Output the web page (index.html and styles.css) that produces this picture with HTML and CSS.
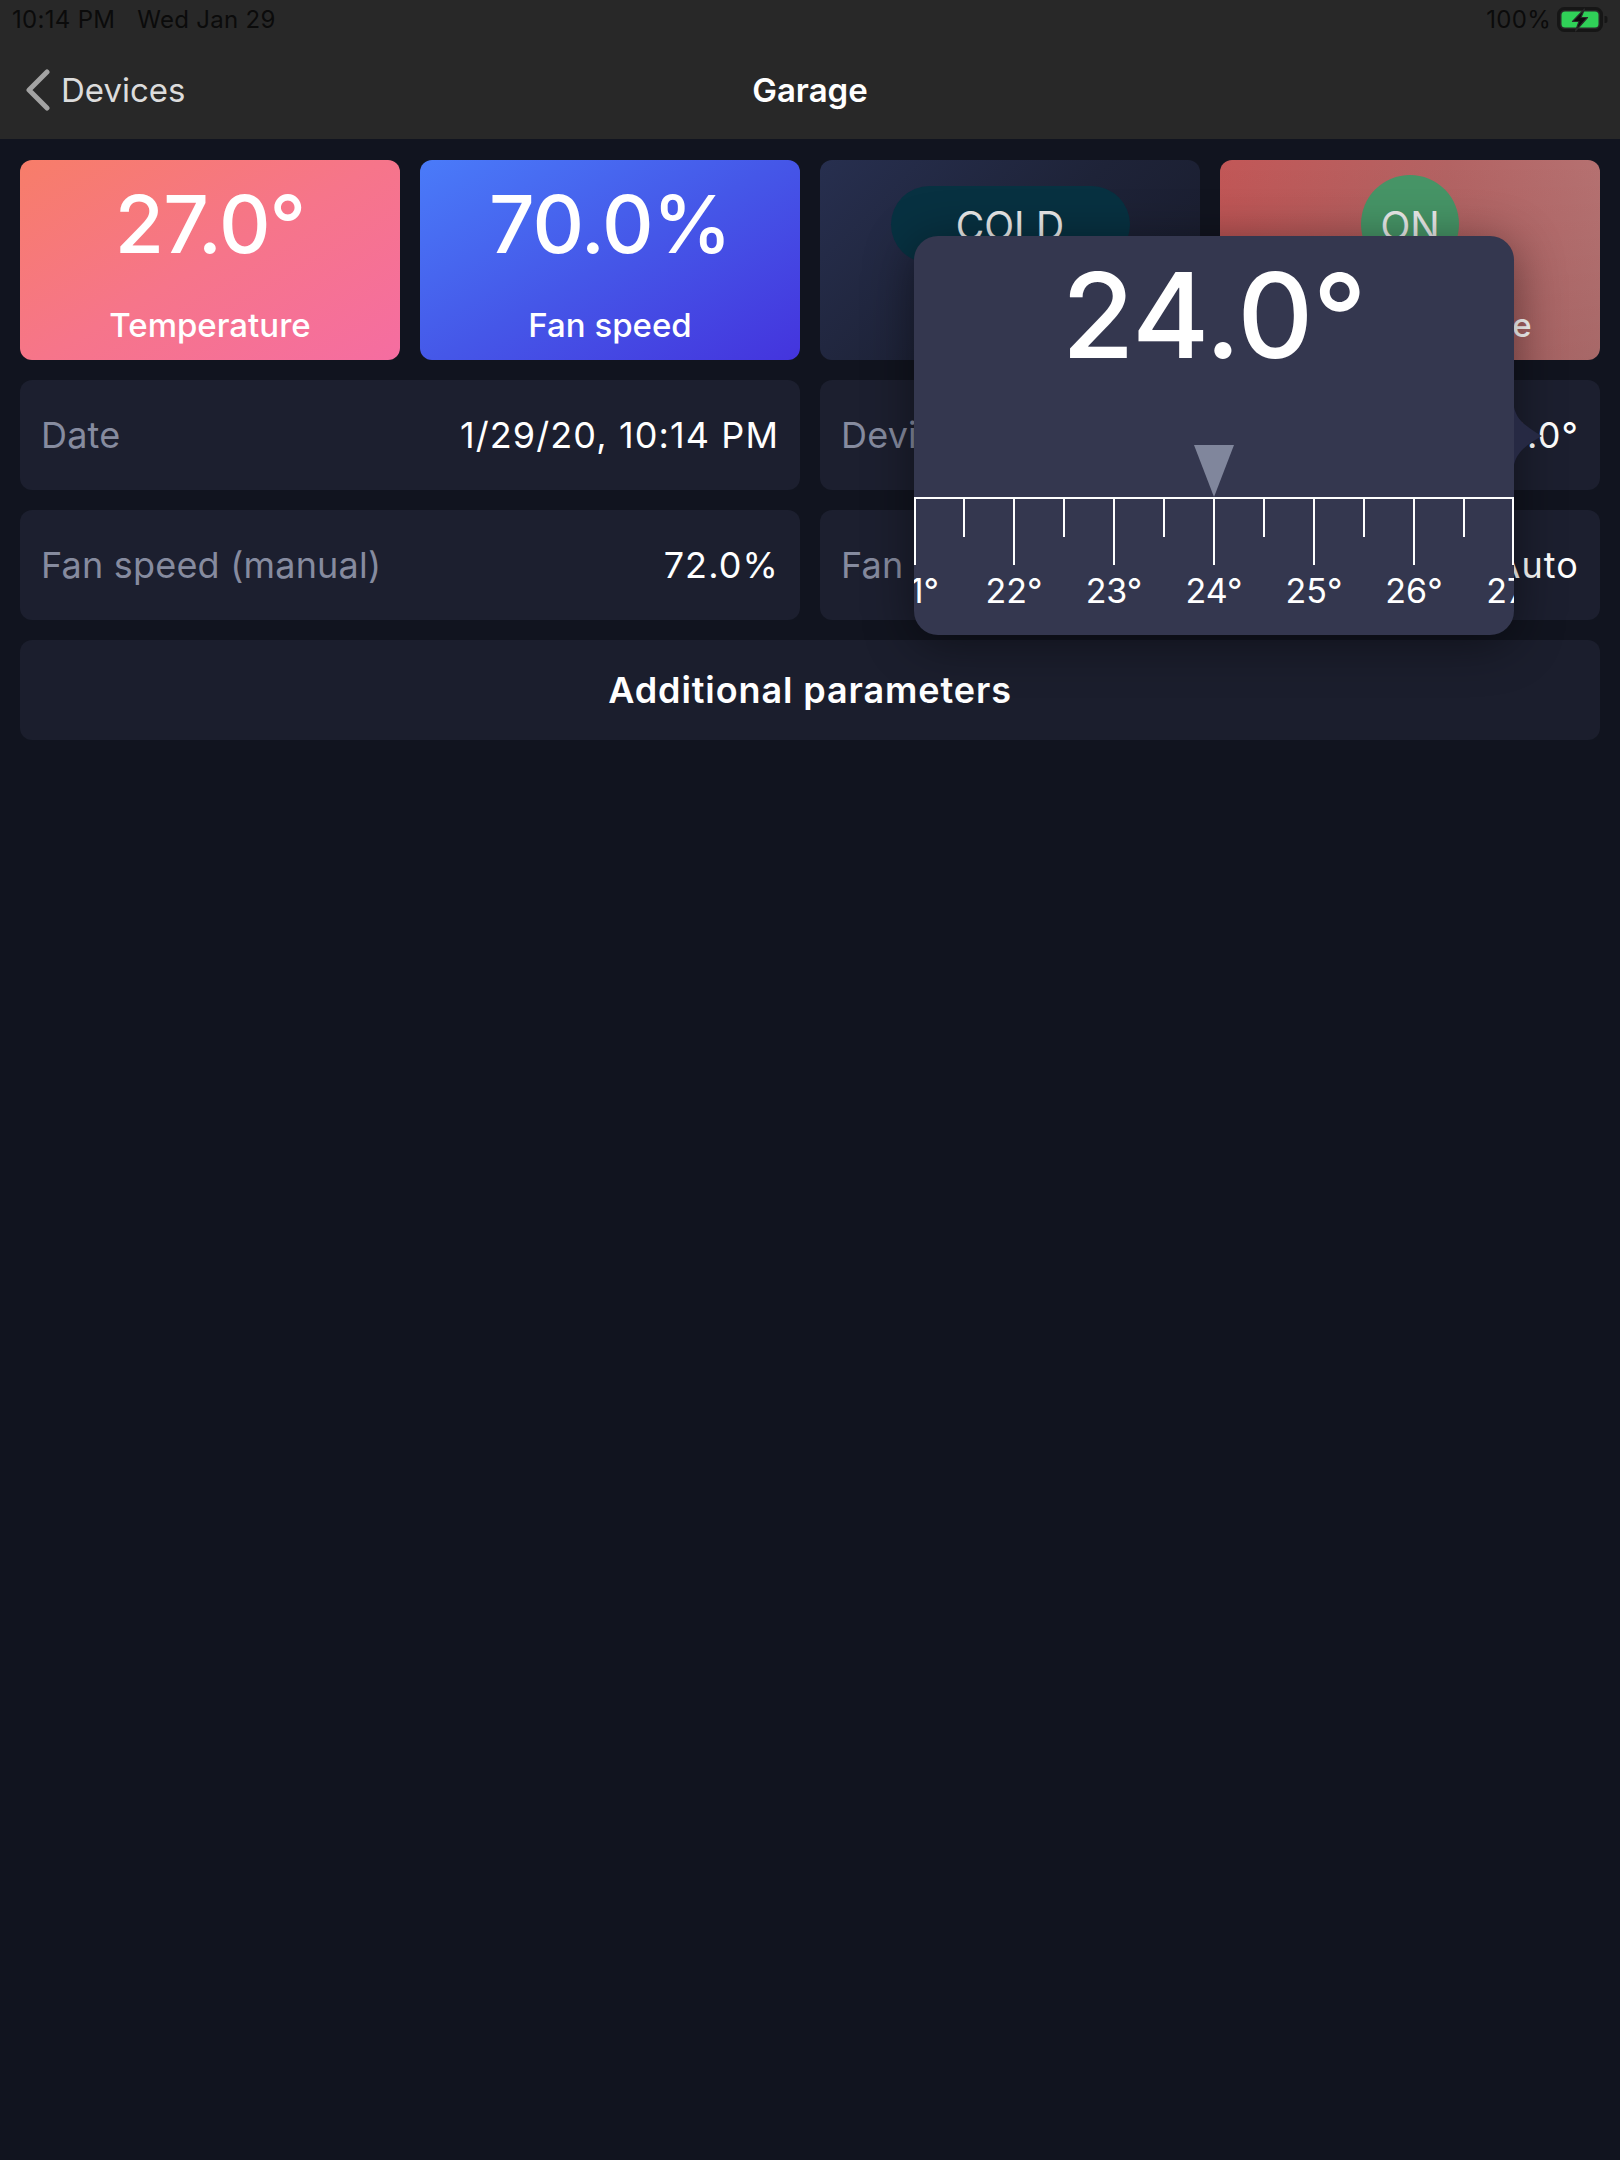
FILE: index.html
```html
<!DOCTYPE html>
<html lang="en">
<head>
<meta charset="utf-8">
<title>Garage</title>
<link rel="stylesheet" href="styles.css">
</head>
<body>
<header class="topbar">
  <div class="status">
    <div class="status-left"><span>10:14 PM</span><span>Wed Jan 29</span></div>
    <div class="status-right">
      <span>100%</span>
      <svg class="battery" width="52" height="26" viewBox="0 0 52 26">
        <rect x="1.5" y="1.5" width="43" height="22" rx="6" fill="none" stroke="#161616" stroke-width="3"/>
        <rect x="4.5" y="4.5" width="37" height="16" rx="3.5" fill="#30d158"/>
        <path d="M47.5 9 h1 a2 2 0 0 1 2 2 v3 a2 2 0 0 1 -2 2 h-1 z" fill="#161616"/>
        <path d="M27.5 2 L15.5 14.5 H22 L18.5 24 L30.5 10.5 H24 Z" fill="#0d0d0d" stroke="#2a2a2a" stroke-width="1.2" stroke-linejoin="round"/>
      </svg>
    </div>
  </div>
  <nav class="nav">
    <div class="back">
      <svg width="26" height="42" viewBox="0 0 26 42"><polyline points="22,3 4,21 22,39" fill="none" stroke="#a3a3a3" stroke-width="5" stroke-linecap="round" stroke-linejoin="round"/></svg>
      <span>Devices</span>
    </div>
    <div class="title">Garage</div>
    <div></div>
  </nav>
</header>

<main class="content">
  <section class="cards">
    <div class="card card-temp">
      <div class="card-top"><span class="card-value">27.0°</span></div>
      <div class="card-label">Temperature</div>
    </div>
    <div class="card card-fan">
      <div class="card-top"><span class="card-value">70.0%</span></div>
      <div class="card-label">Fan speed</div>
    </div>
    <div class="card card-mode">
      <div class="card-top"><span class="pill">COLD</span></div>
      <div class="card-label">Mode</div>
    </div>
    <div class="card card-state">
      <div class="card-top"><span class="dot">ON</span></div>
      <div class="card-label">Operating state</div>
    </div>
  </section>

  <section class="rows">
    <div class="row"><span class="row-label">Date</span><span class="row-value">1/29/20, 10:14 PM</span></div>
    <div class="row"><span class="row-label">Device temperature</span><span class="row-value">24.0°</span></div>
    <div class="row"><span class="row-label">Fan speed (manual)</span><span class="row-value">72.0%</span></div>
    <div class="row"><span class="row-label">Fan mode</span><span class="row-value">Auto</span></div>
  </section>

  <div class="more">Additional parameters</div>

  <div class="popover">
    <div class="pop-value">24.0°</div>
    <div class="pointer"></div>
    <svg class="ruler" width="600" height="68" viewBox="0 0 600 68">
      <g stroke="#ffffff" stroke-width="2">
        <line x1="0" y1="1" x2="600" y2="1"/>
        <line x1="1" y1="0" x2="1" y2="68"/>
        <line x1="50" y1="0" x2="50" y2="40"/>
        <line x1="100" y1="0" x2="100" y2="68"/>
        <line x1="150" y1="0" x2="150" y2="40"/>
        <line x1="200" y1="0" x2="200" y2="68"/>
        <line x1="250" y1="0" x2="250" y2="40"/>
        <line x1="300" y1="0" x2="300" y2="68"/>
        <line x1="350" y1="0" x2="350" y2="40"/>
        <line x1="400" y1="0" x2="400" y2="68"/>
        <line x1="450" y1="0" x2="450" y2="40"/>
        <line x1="500" y1="0" x2="500" y2="68"/>
        <line x1="550" y1="0" x2="550" y2="40"/>
        <line x1="599" y1="0" x2="599" y2="68"/>
      </g>
    </svg>
    <div class="ruler-labels">
      <span>21°</span><span>22°</span><span>23°</span><span>24°</span><span>25°</span><span>26°</span><span>27°</span>
    </div>
    <svg class="pop-arrow" width="30" height="58" viewBox="0 0 30 58">
      <path d="M0 0 C2 10 8 18 28 29 C8 40 2 48 0 58 Z" fill="#262943"/>
    </svg>
  </div>
</main>
</body>
</html>
```

FILE: styles.css
```css
* { box-sizing: border-box; }

html, body {
  margin: 0;
  padding: 0;
}

body {
  width: 1620px;
  height: 2160px;
  background: #11141f;
  font-family: "Inter", "Roboto", "Liberation Sans", sans-serif;
  color: #ffffff;
  overflow: hidden;
}

.topbar {
  background: #282828;
}

.status {
  height: 40px;
  display: flex;
  justify-content: space-between;
  align-items: center;
  padding: 0 11px 0 12px;
  color: #0b0b0b;
  font-size: 24px;
  line-height: 40px;
  letter-spacing: 0.3px;
}

.status-left {
  display: flex;
  gap: 22px;
}

.status-right {
  display: flex;
  align-items: center;
  gap: 6px;
}

.battery {
  display: block;
}

.nav {
  height: 99px;
  display: grid;
  grid-template-columns: 1fr auto 1fr;
  align-items: center;
  padding: 0 25px;
}

.back {
  display: flex;
  align-items: center;
  gap: 10px;
  color: #dcdcdc;
  font-size: 33px;
}

.back svg {
  display: block;
}

.title {
  font-size: 33px;
  font-weight: 600;
  color: #ffffff;
}

.content {
  position: relative;
  padding: 21px 20px 0 20px;
}

.cards {
  display: grid;
  grid-template-columns: repeat(4, 1fr);
  gap: 20px;
}

.card {
  height: 200px;
  border-radius: 12px;
  display: flex;
  flex-direction: column;
  align-items: center;
  overflow: hidden;
}

.card-top {
  height: 128px;
  width: 100%;
  display: flex;
  align-items: center;
  justify-content: center;
}

.card-value {
  font-size: 80px;
  line-height: 80px;
  font-weight: 500;
  letter-spacing: -1px;
}

.card-label {
  margin-top: 20px;
  font-size: 33px;
  line-height: 34px;
  font-weight: 500;
}

.card-temp {
  background: linear-gradient(150deg, #f77d69 0%, #f6758a 50%, #f56da1 100%);
}

.card-fan {
  background: linear-gradient(150deg, #4a7bf9 0%, #4557e8 50%, #4434dd 100%);
}

.card-mode {
  background: linear-gradient(135deg, #272f4f 0%, #1e2338 50%, #181b2b 100%);
}

.card-state {
  background:
    linear-gradient(180deg, rgba(0,0,0,0) 0%, rgba(40,0,0,0.10) 100%),
    linear-gradient(100deg, #c25757 0%, #b36363 55%, #b67474 100%);
}

.pill {
  width: 239px;
  height: 77px;
  border-radius: 39px;
  background: #073141;
  color: #e9e9e9;
  font-size: 39px;
  line-height: 40px;
  padding-top: 4px;
  display: flex;
  align-items: center;
  justify-content: center;
}

.dot {
  width: 98px;
  height: 98px;
  border-radius: 50%;
  background: #469466;
  color: #e9e9e9;
  font-size: 39px;
  line-height: 40px;
  padding-top: 4px;
  display: flex;
  align-items: center;
  justify-content: center;
}

.rows {
  margin-top: 20px;
  display: grid;
  grid-template-columns: 1fr 1fr;
  gap: 20px;
}

.row {
  height: 110px;
  border-radius: 12px;
  background: #1c1f2f;
  display: flex;
  justify-content: space-between;
  align-items: center;
  padding: 0 21px;
  font-size: 36px;
}

.row-label {
  color: #868b9f;
  letter-spacing: 0.2px;
}

.row-value {
  color: #ffffff;
  letter-spacing: 1.1px;
}

.more {
  margin-top: 20px;
  height: 100px;
  border-radius: 12px;
  background: #1b1e2d;
  display: flex;
  align-items: center;
  justify-content: center;
  font-size: 36px;
  font-weight: 600;
  letter-spacing: 0.9px;
}

.popover {
  position: absolute;
  left: 914px;
  top: 97px;
  width: 600px;
  height: 399px;
  border-radius: 24px;
  background: #34374f;
  box-shadow: 0 8px 50px rgba(0, 0, 0, 0.45);
  display: flex;
  flex-direction: column;
  align-items: center;
}

.pop-value {
  margin-top: 20px;
  font-size: 118px;
  line-height: 118px;
  font-weight: 500;
  letter-spacing: -0.5px;
}

.pointer {
  margin-top: 71px;
  width: 0;
  height: 0;
  border-left: 20px solid transparent;
  border-right: 20px solid transparent;
  border-top: 52px solid #80869c;
}

.ruler {
  display: block;
}

.ruler-labels {
  margin-top: 9px;
  width: 600px;
  overflow: hidden;
  display: flex;
  font-size: 34px;
  line-height: 34px;
}

.ruler-labels span {
  flex: 0 0 100px;
  text-align: center;
}

.ruler-labels span:first-child {
  margin-left: -50px;
}

.pop-arrow {
  position: absolute;
  left: 600px;
  top: 171px;
}
```
